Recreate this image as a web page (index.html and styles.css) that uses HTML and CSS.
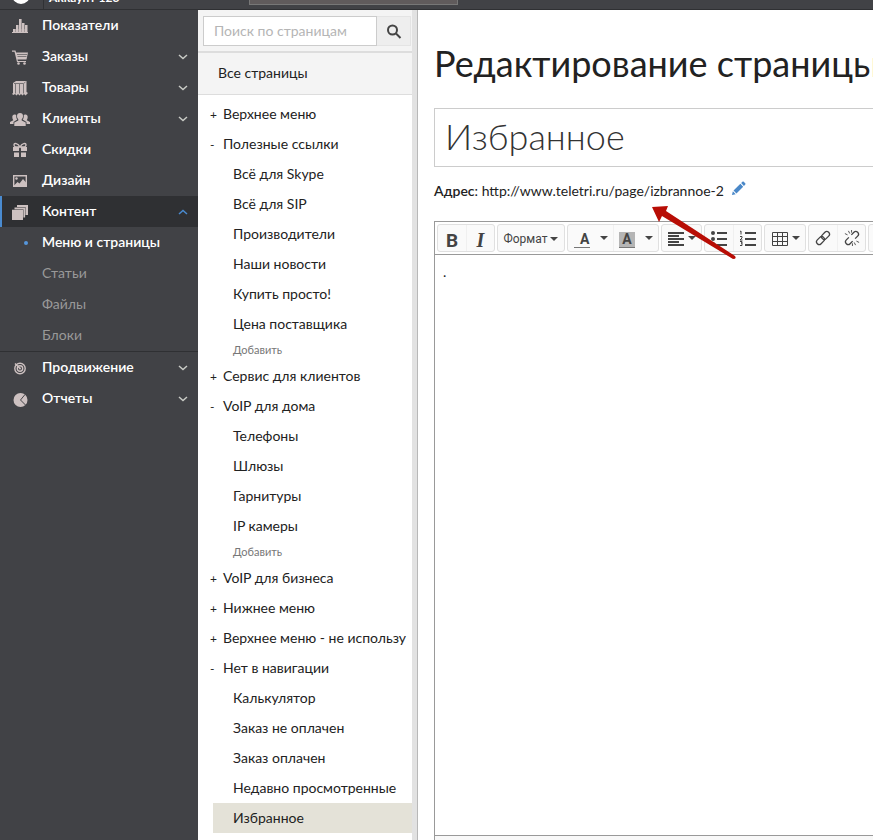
FILE: index.html
```
<!DOCTYPE html>
<html lang="ru">
  <head>
    <meta charset="utf-8" />
    <title>Редактирование страницы</title>
    <link rel="stylesheet" href="styles.css">
  </head>
  <body>
    <header class="topbar">
      <div class="logo"><span class="logo-mark"></span></div>
      <div class="account">Аккаунт 123</div>
      <input class="topbar-search" type="text" aria-label="Поиск">
    </header>

    <div class="layout">
      <nav class="sidebar">
        <ul class="nav">
          <li>
            <a class="nav-link" href="#">
              <svg class="nav-icon" viewBox="0 0 20 16"><path d="M2 14h16v1H2zM3 11h2.500v3H3zM6 7h2.500v7H6zM9 1h2.600v13H9zM12 5h2.500v9H12zM15 7h2.500v7H15z"/><path class="base" d="M3 11h12v4H3z"/></svg>
              <span>Показатели</span>
            </a>
          </li>
          <li>
            <a class="nav-link" href="#">
              <svg class="nav-icon" viewBox="0 0 20 16"><path d="M2 1.500h3.500l.6 2H18l-1.500 7H7.500l.4 1.500H16v1H7L4.500 2.800H2z"/><circle cx="8.500" cy="14.500" r="1.300"/><circle cx="14.500" cy="14.500" r="1.300"/><path class="cut fine" d="M7 5.500h10M7.500 7.500h9"/></svg>
              <span>Заказы</span>
              <svg class="chevron" viewBox="0 0 10 6"><path d="M1 1l4 3.500L9 1"/></svg>
            </a>
          </li>
          <li>
            <a class="nav-link" href="#">
              <svg class="nav-icon" viewBox="0 0 20 16"><path d="M3 3l3-2h10.500v11l1.500 1-2.500 2.500L14 14l-1.500 1.500L11 14l-1.500 1.500L8 14l-1.500 1.500L5 14l-1.500 1L2 14l1-1z"/><path class="cut fine" d="M5.500 4v9.500M9.500 4v9.500M13.500 4v9.500M4 3.500h9.500l2-1.500"/></svg>
              <span>Товары</span>
              <svg class="chevron" viewBox="0 0 10 6"><path d="M1 1l4 3.500L9 1"/></svg>
            </a>
          </li>
          <li>
            <a class="nav-link" href="#">
              <svg class="nav-icon" viewBox="0 0 20 16"><path d="M10 2c2 0 3 1.300 3 3 0 1.500-.5 2.500-1.300 3.200v1.300l4 2V15H4.300v-3.500l4-2V8.200C7.500 7.500 7 6.500 7 5c0-1.700 1-3 3-3z"/><path d="M4.500 3.500c1 0 1.600.4 1.800 1-.2 1.700.1 3 1 4L3.500 11v2H0v-2l3.300-1.800C2.600 8.400 2.300 7.300 2.300 6c0-1.600.8-2.500 2.200-2.500zM15.500 3.500c-1 0-1.600.4-1.800 1 .2 1.700-.1 3-1 4l3.800 2.500v2H20v-2l-3.300-1.800c.7-.8 1-1.900 1-3.200 0-1.600-.8-2.500-2.200-2.500z"/></svg>
              <span>Клиенты</span>
              <svg class="chevron" viewBox="0 0 10 6"><path d="M1 1l4 3.500L9 1"/></svg>
            </a>
          </li>
          <li>
            <a class="nav-link" href="#">
              <svg class="nav-icon" viewBox="0 0 20 16"><path d="M3 5h6v4H3zM11 5h6v4h-6zM4 10.500h5V15H4zM11 10.500h5V15h-5z"/><path class="line" d="M10 5C8 1 4 .5 4 3s3 2 6 2c3 0 6 .5 6-2s-4-2-6 2z"/></svg>
              <span>Скидки</span>
            </a>
          </li>
          <li>
            <a class="nav-link" href="#">
              <svg class="nav-icon" viewBox="0 0 20 16"><path class="line" d="M3.700 2.700h12.600v10.600H3.700z"/><circle cx="6.500" cy="5.500" r="1.200"/><path d="M4 12.500L7.500 9l2 1.500L13 6l3.500 4v3H4z"/></svg>
              <span>Дизайн</span>
            </a>
          </li>
          <li>
            <a class="nav-link active" href="#">
              <svg class="nav-icon" viewBox="0 0 20 16"><path d="M7 1h11v10h-2.500V3H7zM4.500 3.400h10.600V13.500h-1.700V5.300H4.500zM2 5.700h11V16H2z"/></svg>
              <span>Контент</span>
              <svg class="chevron" viewBox="0 0 10 6"><path d="M1 5l4-3.500L9 5"/></svg>
            </a>
            <ul class="subnav">
              <li><a class="subnav-link current" href="#"><span>Меню и страницы</span></a></li>
              <li><a class="subnav-link" href="#"><span>Статьи</span></a></li>
              <li><a class="subnav-link" href="#"><span>Файлы</span></a></li>
              <li><a class="subnav-link" href="#"><span>Блоки</span></a></li>
            </ul>
          </li>
          <li>
            <a class="nav-link" href="#">
              <svg class="nav-icon" viewBox="0 0 20 16"><circle class="line" cx="10" cy="8.500" r="5.200"/><circle class="line" cx="10" cy="8.500" r="2.700"/><circle cx="10" cy="8.500" r="1"/><path class="line" d="M5 3.500l5 5"/></svg>
              <span>Продвижение</span>
              <svg class="chevron" viewBox="0 0 10 6"><path d="M1 1l4 3.500L9 1"/></svg>
            </a>
          </li>
          <li>
            <a class="nav-link" href="#">
              <svg class="nav-icon" viewBox="0 0 20 16"><circle cx="10.500" cy="9" r="7"/><path class="cut" d="M15 3.500L10.500 9l5 5"/></svg>
              <span>Отчеты</span>
              <svg class="chevron" viewBox="0 0 10 6"><path d="M1 1l4 3.500L9 1"/></svg>
            </a>
          </li>
        </ul>
      </nav>

      <aside class="pages">
        <form class="page-search">
          <input type="text" placeholder="Поиск по страницам" aria-label="Поиск по страницам">
          <button type="button" aria-label="Найти">
            <svg viewBox="0 0 16 16"><circle cx="6.500" cy="6" r="4.500"/><path d="M10 9.500l4.500 4.500"/></svg>
          </button>
        </form>
        <a class="all-pages" href="#">Все страницы</a>
        <ul class="tree">
          <li><button type="button">+</button><a href="#">Верхнее меню</a></li>
          <li>
            <button type="button">-</button><a href="#">Полезные ссылки</a>
            <ul>
              <li><a href="#">Всё для Skype</a></li>
              <li><a href="#">Всё для SIP</a></li>
              <li><a href="#">Производители</a></li>
              <li><a href="#">Наши новости</a></li>
              <li><a href="#">Купить просто!</a></li>
              <li><a href="#">Цена поставщика</a></li>
              <li><a class="add" href="#">Добавить</a></li>
            </ul>
          </li>
          <li><button type="button">+</button><a href="#">Сервис для клиентов</a></li>
          <li>
            <button type="button">-</button><a href="#">VoIP для дома</a>
            <ul>
              <li><a href="#">Телефоны</a></li>
              <li><a href="#">Шлюзы</a></li>
              <li><a href="#">Гарнитуры</a></li>
              <li><a href="#">IP камеры</a></li>
              <li><a class="add" href="#">Добавить</a></li>
            </ul>
          </li>
          <li><button type="button">+</button><a href="#">VoIP для бизнеса</a></li>
          <li><button type="button">+</button><a href="#">Нижнее меню</a></li>
          <li><button type="button">+</button><a href="#">Верхнее меню - не использу</a></li>
          <li>
            <button type="button">-</button><a href="#">Нет в навигации</a>
            <ul>
              <li><a href="#">Калькулятор</a></li>
              <li><a href="#">Заказ не оплачен</a></li>
              <li><a href="#">Заказ оплачен</a></li>
              <li><a href="#">Недавно просмотренные</a></li>
              <li><a class="selected" href="#">Избранное</a></li>
            </ul>
          </li>
        </ul>
      </aside>

      <main class="content">
        <h1>Редактирование страницы</h1>
        <input class="title-input" type="text" value="Избранное" aria-label="Название страницы">
        <p class="address">
          <b>Адрес</b>: <a href="#">http://www.teletri.ru/page/izbrannoe-2</a>
          <button type="button" aria-label="Изменить адрес">
            <svg viewBox="0 0 16 16"><path d="M1 15l1-4 3 3zM2.700 10.200L10 3l3 3-7.200 7.300zM10.800 2.200l1.400-1.400c.4-.4 1-.4 1.400 0l1.600 1.600c.4.4.4 1 0 1.400l-1.400 1.400z"/></svg>
          </button>
        </p>

        <div class="editor">
          <div class="toolbar">
            <div class="group">
              <button type="button" class="bold" aria-label="Жирный">B</button>
              <button type="button" class="italic" aria-label="Курсив">I</button>
            </div>
            <div class="group">
              <button type="button" class="format">Формат <i class="caret"></i></button>
            </div>
            <div class="group">
              <button type="button" class="color" aria-label="Цвет текста"><span class="letter"><span>A</span></span><i class="caret"></i></button>
              <button type="button" class="color" aria-label="Цвет фона"><span class="letter fill"><span>A</span></span><i class="caret"></i></button>
            </div>
            <div class="group">
              <button type="button" class="align" aria-label="Выравнивание">
                <svg viewBox="0 0 18 16"><path d="M1 3h16M1 6h11M1 9h16M1 12h11M1 15h16"/></svg><i class="caret"></i>
              </button>
            </div>
            <div class="group">
              <button type="button" aria-label="Маркированный список">
                <svg viewBox="0 0 18 16"><path d="M7 3h10M7 9h10M7 15h10"/><g class="solid"><circle cx="3" cy="3" r="2"/><circle cx="3" cy="9" r="2"/><circle cx="3" cy="14" r="2"/></g></svg>
              </button>
              <button type="button" aria-label="Нумерованный список">
                <svg viewBox="0 0 18 16"><path d="M6 3h11M6 9h11M6 15h11"/><path class="thin" d="M1 1.500l1-.5v3.500M1 6.500h2V8l-2 2h2.500M1 11.500h2V13H2h1v2.500H1"/></svg>
              </button>
            </div>
            <div class="group">
              <button type="button" class="table" aria-label="Таблица">
                <svg viewBox="0 0 18 16"><path class="thin" d="M1.500 2.500h15v13h-15zM1.500 6.500h15M1.500 11.500h15M6.500 2.500v13M11.500 2.500v13"/></svg><i class="caret"></i>
              </button>
            </div>
            <div class="group">
              <button type="button" aria-label="Ссылка">
                <svg viewBox="0 0 18 18"><g class="chain" transform="rotate(-45 9 9)"><rect x="0" y="6" width="10" height="6" rx="3"/><rect x="8" y="6" width="10" height="6" rx="3"/></g></svg>
              </button>
              <button type="button" aria-label="Убрать ссылку">
                <svg viewBox="0 0 18 18"><g class="chain" transform="rotate(-45 9 9)"><path d="M7 6H3a3 3 0 000 6h4M11 6h4a3 3 0 010 6h-4"/></g><path class="thin" d="M1 4l3 1.500M5 1l1.500 3M8.500 0v3M17 14l-3-1.500M13 17l-1.500-3M9.500 18v-3"/></svg>
              </button>
            </div>
            <div class="group">
              <button type="button" aria-label="Изображение"></button>
            </div>
          </div>
          <div class="editor-body" contenteditable="true">.</div>
          <div class="editor-footer"></div>
        </div>

        <svg class="pointer" viewBox="0 0 84 54"><path d="M0 1L16 0l-2 5 69 45q2 3-2 3L10 10l-3 6z"/></svg>
      </main>
    </div>
  </body>
</html>
```
FILE: styles.css
```
* {
  box-sizing: border-box;
}
body {
  margin: 0;
  height: 100vh;
  display: flex;
  flex-direction: column;
  overflow: hidden;
  font-family: Lato, "Noto Sans", sans-serif;
  font-size: 14px;
  color: #222;
}
ul {
  list-style: none;
  margin: 0;
  padding: 0;
}
a {
  color: inherit;
  text-decoration: none;
}
button {
  padding: 0;
  border: 0;
  background: none;
  font: inherit;
  color: inherit;
}

/* top bar */
.topbar {
  flex: none;
  height: 10px;
  display: flex;
  align-items: flex-end;
  overflow: hidden;
  background: #414246;
  border-bottom: 1px solid #2f3033;
  color: #fff;
}
.logo {
  width: 44px;
  height: 40px;
  padding: 17px 0 0 12px;
  border-right: 1px solid #303134;
}
.logo-mark {
  display: block;
  width: 18px;
  height: 18px;
  border-radius: 50%;
  background: #fff;
}
.account {
  width: 205px;
  padding: 0 0 4px 5px;
  font-size: 12px;
  font-weight: bold;
  line-height: 14px;
}
.topbar-search {
  width: 209px;
  height: 26px;
  margin-bottom: 4px;
  border: 1px solid #777;
  background: #605b5c;
}

.layout {
  flex: 1;
  min-height: 0;
  display: flex;
}

/* main menu */
.sidebar {
  flex: none;
  width: 198px;
  background: #414246;
  color: #fff;
  font-weight: 600;
}
.nav-link {
  display: flex;
  align-items: center;
  height: 31px;
  padding: 0 10px;
}
.nav-link span,
.subnav-link span {
  padding-bottom: 2px;
}
.nav-link.active {
  padding-left: 8px;
  border-left: 2px solid #4a8bd0;
  background: #2f3033;
}
.nav-icon {
  width: 20px;
  height: 16px;
  margin-right: 12px;
  fill: #cdc1c1;
}
.nav-icon .base {
  opacity: 0.4;
}
.nav-icon .cut {
  fill: none;
  stroke: #414246;
}
.nav-icon .fine {
  opacity: 0.6;
}
.nav-icon .line {
  fill: none;
  stroke: #cdc1c1;
  stroke-width: 1.4;
}
.chevron {
  width: 10px;
  height: 6px;
  margin-left: auto;
  fill: none;
  stroke: #c9cbc6;
  stroke-width: 1.5;
}
.active .chevron {
  stroke: #4a8bd0;
}
.subnav {
  border-bottom: 1px solid #2f3033;
}
.subnav-link {
  display: flex;
  align-items: center;
  height: 31px;
  padding-left: 42px;
  font-weight: normal;
  color: #999;
}
.subnav-link.current {
  padding-left: 24px;
  font-weight: 600;
  color: #fff;
}
.subnav-link.current::before {
  content: "";
  width: 4px;
  height: 4px;
  margin-right: 14px;
  border-radius: 50%;
  background: #5596dc;
}

/* page tree */
.pages {
  flex: none;
  width: 220px;
  overflow: hidden;
  border-right: 1px solid #b8b8b8;
  box-shadow: inset -5px 0 #e2e2e2;
  padding-right: 5px;
}
.page-search {
  display: flex;
  height: 43px;
  padding: 6px 1px 5px 5px;
  background: #f4f4f4;
  border-bottom: 2px solid #ddd;
}
.page-search input {
  flex: 1;
  min-width: 0;
  padding: 0 10px 2px;
  border: 1px solid #ccc;
  font: inherit;
}
.page-search input::placeholder {
  color: #b5b5b5;
}
.page-search button {
  width: 34px;
  border: 1px solid #e4e4e4;
  border-left: 0;
  background: #eee;
}
.page-search svg {
  width: 16px;
  height: 16px;
  fill: none;
  stroke: #444;
  stroke-width: 2;
  vertical-align: middle;
}
.all-pages {
  display: block;
  height: 42px;
  padding-left: 20px;
  line-height: 40px;
  background: #f4f4f4;
  border-bottom: 1px solid #ddd;
}
.tree {
  padding: 4px 0 0 10px;
  line-height: 30px;
  white-space: nowrap;
}
.tree button {
  width: 15px;
  padding-left: 2px;
  font-size: 12px;
  line-height: 16px;
  text-align: left;
}
.tree ul {
  padding-left: 5px;
}
.tree ul a {
  display: block;
  padding-left: 20px;
}
.tree ul .add {
  font-size: 11px;
  line-height: 22px;
  color: #777;
}
.tree .selected {
  background: #e4e2d8;
}

/* page form */
.content {
  flex: 1;
  min-width: 0;
  position: relative;
  display: flex;
  flex-direction: column;
  overflow: hidden;
  padding-left: 16px;
}
h1 {
  margin: 29px 0 21px;
  font-size: 36px;
  font-weight: normal;
  line-height: 48px;
  white-space: nowrap;
}
.title-input {
  height: 59px;
  padding: 0 10px 4px;
  border: 1px solid #ccc;
  border-right: 0;
  font: 300 36px Lato, "Noto Sans", sans-serif;
  color: #333;
}
.address {
  margin: 14px 0 20px;
  line-height: 20px;
}
.address b {
  font-weight: 600;
}
.address button {
  margin-left: 4px;
  line-height: 16px;
}
.address svg {
  width: 15px;
  height: 15px;
  fill: #4a88c8;
}

.editor {
  flex: 1;
  display: flex;
  flex-direction: column;
  border: 1px solid #999;
  border-width: 1px 0 0 1px;
}
.toolbar {
  display: flex;
  gap: 2px;
  height: 33px;
  padding: 2px;
  overflow: hidden;
  border-bottom: 1px solid #999;
  color: #444;
}
.group {
  flex: none;
  display: flex;
  height: 28px;
  border: 1px solid #e0e0e0;
  border-radius: 3px;
  background: #fafafa;
}
.group button {
  display: flex;
  align-items: center;
  justify-content: center;
  gap: 3px;
  width: 28px;
}
.group button + button {
  border-left: 1px solid #f0f0f0;
}
.group svg {
  width: 18px;
  height: 16px;
  fill: none;
  stroke: #444;
  stroke-width: 2;
}
.group .thin {
  stroke-width: 1;
}
.group .solid {
  fill: #444;
  stroke: none;
}
.group .chain {
  stroke-width: 1.5;
}
.group .bold {
  padding-top: 4px;
  font: bold 19px Roboto, sans-serif;
}
.group .italic {
  padding-top: 4px;
  font: italic bold 20px "Liberation Serif", serif;
}
.group .format {
  width: 66px;
  padding-top: 2px;
  font: 12px Roboto, sans-serif;
}
.group .color {
  gap: 10px;
  width: 45px;
}
.group .align {
  width: 39px;
}
.group .table {
  width: 40px;
}
.letter {
  width: 16px;
  margin-top: 4px;
  border-bottom: 1px solid #777;
  font: bold 14px/15px Roboto, sans-serif;
  text-align: right;
}
.letter.fill {
  background: #b5b5b5;
  text-align: center;
}
.caret {
  border: 4px solid transparent;
  border-top-color: #444;
  border-bottom: 0;
}
.editor-body {
  flex: 1;
  padding: 8px;
  outline: 0;
}
.editor-footer {
  height: 5px;
  border-top: 1px solid #999;
  background: #f8f8f8;
}

/* red arrow pointing at the address */
.pointer {
  position: absolute;
  left: 234px;
  top: 196px;
  width: 84px;
  height: 54px;
  fill: #b80d05;
}
```
